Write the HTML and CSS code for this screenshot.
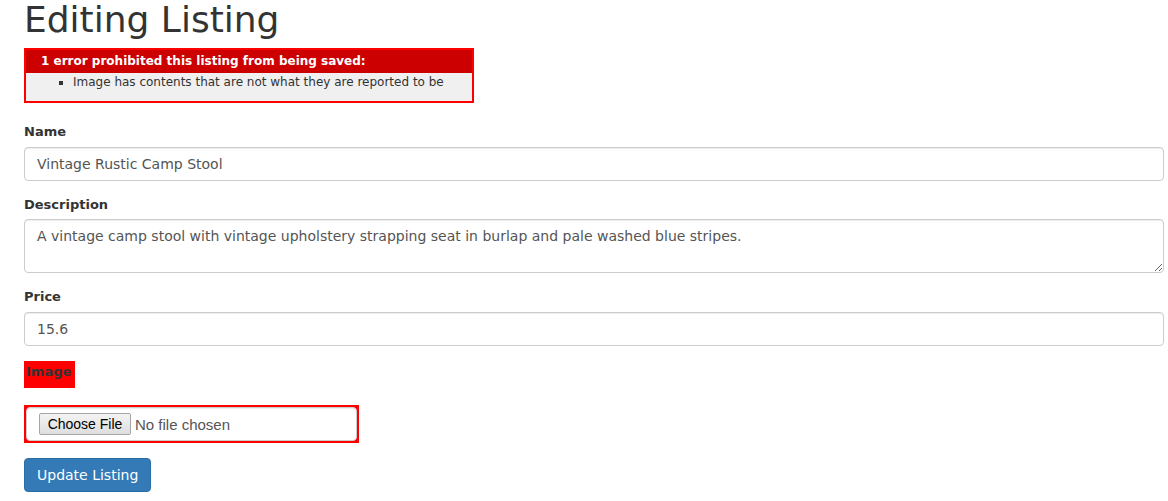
FILE: index.html
```html
<!DOCTYPE html>
<html>
<head>
<meta charset="utf-8">
<title>Editing Listing</title>
<link rel="stylesheet" href="styles.css">
</head>
<body>
<div class="container">
  <h1 class="title">Editing Listing</h1>
  <div class="error-box">
    <h2 class="error-head">1 error prohibited this listing from being saved:</h2>
    <ul class="error-list">
      <li>Image has contents that are not what they are reported to be</li>
    </ul>
  </div>
  <form class="form">
    <div class="form-group">
      <label class="label">Name</label>
      <input class="control" type="text" value="Vintage Rustic Camp Stool">
    </div>
    <div class="form-group">
      <label class="label">Description</label>
      <textarea class="control area" rows="2">A vintage camp stool with vintage upholstery strapping seat in burlap and pale washed blue stripes.</textarea>
    </div>
    <div class="form-group">
      <label class="label">Price</label>
      <input class="control" type="text" value="15.6">
    </div>
    <div class="form-group">
      <div class="field-error img-label"><label class="label">Image</label></div>
      <div class="field-error file-wrap">
        <div class="file-control">
          <span class="file-btn">Choose File</span>
          <span class="file-text">No file chosen</span>
        </div>
      </div>
    </div>
    <button type="button" class="btn">Update Listing</button>
  </form>
</div>
</body>
</html>
```

FILE: styles.css
```css
* { box-sizing: border-box; }
html, body { margin: 0; padding: 0; background: #fff; }
body {
  font-family: "DejaVu Sans", Verdana, sans-serif;
  font-size: 14px;
  line-height: 1.42857;
  color: #333;
}
.container { padding: 0 4px 0 24px; }
.title {
  margin: 0 0 8px;
  font-size: 36px;
  font-weight: 500;
  line-height: 40px;
  color: #333;
}
.error-box {
  width: 450px;
  border: 2px solid #f00;
  padding: 7px 7px 0;
  margin-bottom: 20px;
  background: #f0f0f0;
}
.error-head {
  margin: -7px -7px 0;
  padding: 5px 5px 5px 15px;
  font-size: 12px;
  line-height: 13px;
  font-weight: bold;
  background: #c00;
  color: #fff;
}
.error-list {
  margin: 0 0 10px;
  padding-left: 40px;
}
.error-list li {
  font-size: 12px;
  line-height: 18px;
  list-style: square;
}
.form-group { margin-bottom: 15px; }
.label {
  display: block;
  font-size: 13px;
  font-weight: bold;
  line-height: 1.42857;
  margin-bottom: 5px;
  color: #333;
}
.control {
  display: block;
  width: 100%;
  height: 34px;
  padding: 6px 12px;
  font-family: "DejaVu Sans", Verdana, sans-serif;
  font-size: 14px;
  line-height: 20px;
  color: #555;
  background: #fff;
  border: 1px solid #ccc;
  border-radius: 4px;
  box-shadow: inset 0 1px 1px rgba(0,0,0,.075);
  outline: none;
  margin: 0;
}
.area {
  height: 54px;
  resize: vertical;
}
.field-error {
  display: table;
  padding: 2px;
  background: #f00;
}
.img-label { padding-right: 4px; }
.file-wrap { margin-top: 17px; }
.file-control {
  width: 331px;
  height: 34px;
  padding: 6px 12px;
  background: #fff;
  border: 1px solid #ccc;
  border-radius: 4px;
  box-shadow: inset 0 1px 1px rgba(0,0,0,.075);
  display: flex;
  align-items: center;
  font-family: "Liberation Sans", Arial, sans-serif;
}
.file-btn {
  display: inline-block;
  width: 92px;
  height: 22px;
  line-height: 20px;
  text-align: center;
  font-size: 14px;
  color: #000;
  background: linear-gradient(#f4f4f4, #dedede);
  border: 1px solid #a6a6a6;
  border-radius: 2px;
}
.file-text {
  margin-left: 4px;
  font-size: 15px;
  color: #555;
}
.btn {
  display: block;
  height: 34px;
  padding: 6px 12px;
  font-family: "DejaVu Sans", Verdana, sans-serif;
  font-size: 14px;
  line-height: 20px;
  color: #fff;
  background: #337ab7;
  border: 1px solid #2e6da4;
  border-radius: 4px;
  margin: 0;
}
```
